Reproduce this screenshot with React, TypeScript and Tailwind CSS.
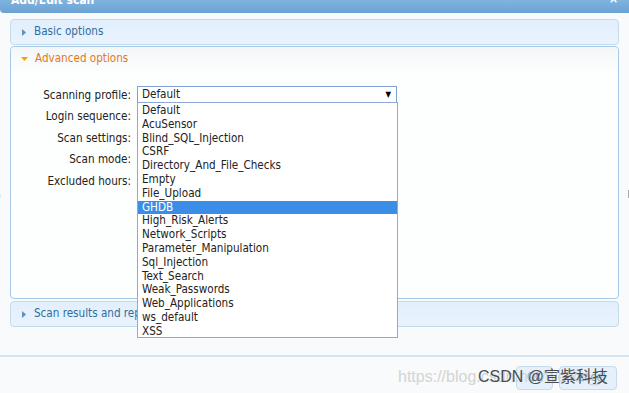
import React from 'react'

const profiles = [
  'Default',
  'AcuSensor',
  'Blind_SQL_Injection',
  'CSRF',
  'Directory_And_File_Checks',
  'Empty',
  'File_Upload',
  'GHDB',
  'High_Risk_Alerts',
  'Network_Scripts',
  'Parameter_Manipulation',
  'Sql_Injection',
  'Text_Search',
  'Weak_Passwords',
  'Web_Applications',
  'ws_default',
  'XSS',
]

const labels = ['Scanning profile:', 'Login sequence:', 'Scan settings:', 'Scan mode:', 'Excluded hours:']

function CollapsedHeader({ label }: { label: string }) {
  return (
    <div className="h-[26px] rounded-[4px] border border-[#c5dbec] bg-gradient-to-b from-[#e2effc] to-[#e8f3fd] flex items-center pl-[11px] gap-[8px]">
      <svg width="4" height="7" viewBox="0 0 4 7">
        <polygon points="0,0 4,3.5 0,7" fill="#5d8fc2" />
      </svg>
      <span className="text-[#2e6e9e]">{label}</span>
    </div>
  )
}

export default function App() {
  return (
    <div
      className="relative w-[629px] h-[393px] overflow-hidden bg-[#f8fafb] text-[11.6px] text-[#222]"
      style={{ fontFamily: '"DejaVu Sans Condensed", Tahoma, "DejaVu Sans", sans-serif' }}
    >
      {/* Title bar */}
      <div className="h-[13px] bg-gradient-to-b from-[#80b4e0] to-[#6aa2d2] rounded-bl-[4px] flex items-end justify-between px-[11px] overflow-hidden">
        <span className="text-white font-bold text-[12px] leading-[12px] translate-y-[-7px]">Add/Edit scan</span>
        <span className="text-white font-bold text-[12px] leading-[12px] translate-y-[-8px]">×</span>
      </div>

      <div className="px-[10px] pt-[6px] flex flex-col">
        <CollapsedHeader label="Basic options" />

        {/* Advanced options */}
        <div className="mt-[1px] h-[253px] rounded-[4px] border border-[#a6c9e8] bg-[#fdfefe] flex flex-col">
          <div className="h-[24px] rounded-t-[4px] bg-gradient-to-b from-[#f4f7f9] to-[#fbfcfd] flex items-center pl-[10px] gap-[7px]">
            <svg width="7" height="4" viewBox="0 0 7 4">
              <polygon points="0,0 7,0 3.5,4" fill="#f2a20f" />
            </svg>
            <span className="text-[#e6781a]">Advanced options</span>
          </div>
          <div className="pt-[15px] flex flex-col">
            {labels.map((l, i) => (
              <div key={l} className="h-[21.4px] flex items-start">
                <span className="w-[120px] text-right leading-[18px]">{l}</span>
                {i === 0 && (
                  <div className="ml-[6px] w-[260px] h-[17px] border border-[#7f9fd6] bg-white flex items-center justify-between pl-[4px] pr-[5px]">
                    <span>Default</span>
                    <span className="text-[8px] text-black">▼</span>
                  </div>
                )}
              </div>
            ))}
          </div>
        </div>

        <div className="mt-[2px]">
          <CollapsedHeader label="Scan results and reports" />
        </div>
      </div>

      {/* Footer */}
      <div className="mt-[28px] border-t-2 border-[#d6e4f0] h-[40px] flex justify-end items-start pt-[9px] pr-[12px] gap-[6px]">
        <button className="w-[37px] h-[24px] rounded-[4px] border border-[#c5dbec] bg-[#e6f0fa] text-[#7aa6cf]">OK</button>
        <button className="w-[58px] h-[24px] rounded-[4px] border border-[#c5dbec] bg-[#e6f0fa] text-[#7aa6cf]">Cancel</button>
      </div>

      {/* Open dropdown list */}
      <div className="absolute left-[137px] top-[102px] w-[261px] h-[236px] border border-[#8fa8d8] bg-white flex flex-col pt-[1px]">
        {profiles.map((p) => (
          <div
            key={p}
            className={`h-[13.8px] leading-[13.8px] pl-[4px] ${p === 'GHDB' ? 'bg-[#3a8ee8] text-white' : 'text-[#222]'}`}
          >
            {p}
          </div>
        ))}
      </div>

      {/* edge remnants */}
      <span className="absolute left-[-3px] top-[188px] text-[#888] text-[11px]">)</span>
      <span className="absolute right-[0px] top-[190px] w-[1px] h-[8px] bg-[#aaa]" />

      {/* Watermark */}
      <div
        className="absolute left-[398px] top-[365px] text-[16px] text-[#d4d4d4] whitespace-nowrap"
        style={{ fontFamily: '"Liberation Sans", sans-serif' }}
      >
        https://blog.csdn.net/weixin_i
      </div>
      <div
        className="absolute left-[478px] top-[365px] text-[16px] text-[#4d4d4d] whitespace-nowrap"
        style={{ fontFamily: '"Liberation Sans", "Noto Sans CJK SC", sans-serif' }}
      >
        CSDN @宣紫科技
      </div>
    </div>
  )
}
